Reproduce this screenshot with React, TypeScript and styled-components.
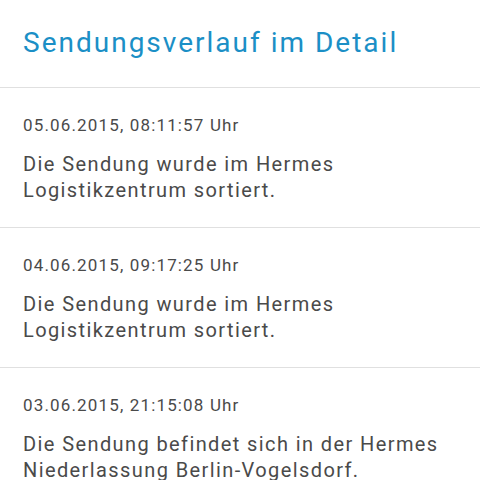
import React from 'react';
import styled, { createGlobalStyle } from 'styled-components';

const GlobalStyle = createGlobalStyle`
  html, body {
    margin: 0;
    padding: 0;
    background: #ffffff;
    font-family: Roboto, "Noto Sans", Arial, sans-serif;
  }
`;

type Entry = {
  time: string;
  text: string[];
};

const entries: Entry[] = [
  {
    time: '05.06.2015, 08:11:57 Uhr',
    text: ['Die Sendung wurde im Hermes', 'Logistikzentrum sortiert.'],
  },
  {
    time: '04.06.2015, 09:17:25 Uhr',
    text: ['Die Sendung wurde im Hermes', 'Logistikzentrum sortiert.'],
  },
  {
    time: '03.06.2015, 21:15:08 Uhr',
    text: ['Die Sendung befindet sich in der Hermes', 'Niederlassung Berlin-Vogelsdorf.'],
  },
];

const App: React.FC = () => {
  return (
    <Page>
      <GlobalStyle />
      <Header>
        <Title>Sendungsverlauf im Detail</Title>
      </Header>
      <List>
        {entries.map((entry) => (
          <Item key={entry.time}>
            <Time>{entry.time}</Time>
            <Message>
              {entry.text.map((line) => (
                <Line key={line}>{line}</Line>
              ))}
            </Message>
          </Item>
        ))}
      </List>
    </Page>
  );
};

const Page = styled.div`
  width: 480px;
  height: 480px;
  overflow: hidden;
  background: #ffffff;
`;

const Header = styled.header`
  padding: 26px 23px 28px;
  border-bottom: 1px solid #e0e0e0;
`;

const Title = styled.h1`
  margin: 0;
  font-size: 28px;
  line-height: 33px;
  font-weight: 400;
  letter-spacing: 2px;
  color: #1b8fc6;
`;

const List = styled.div`
  display: flex;
  flex-direction: column;
`;

const Item = styled.div`
  display: flex;
  flex-direction: column;
  gap: 16px;
  padding: 27px 23px 24px;
  border-bottom: 1px solid #e0e0e0;
`;

const Time = styled.div`
  font-size: 17px;
  line-height: 20px;
  letter-spacing: 1.15px;
  color: #4a4a4a;
`;

const Message = styled.div`
  font-size: 20px;
  line-height: 26px;
  letter-spacing: 1.4px;
  color: #4a4a4a;
  white-space: nowrap;
`;

const Line = styled.div``;

export default App;
